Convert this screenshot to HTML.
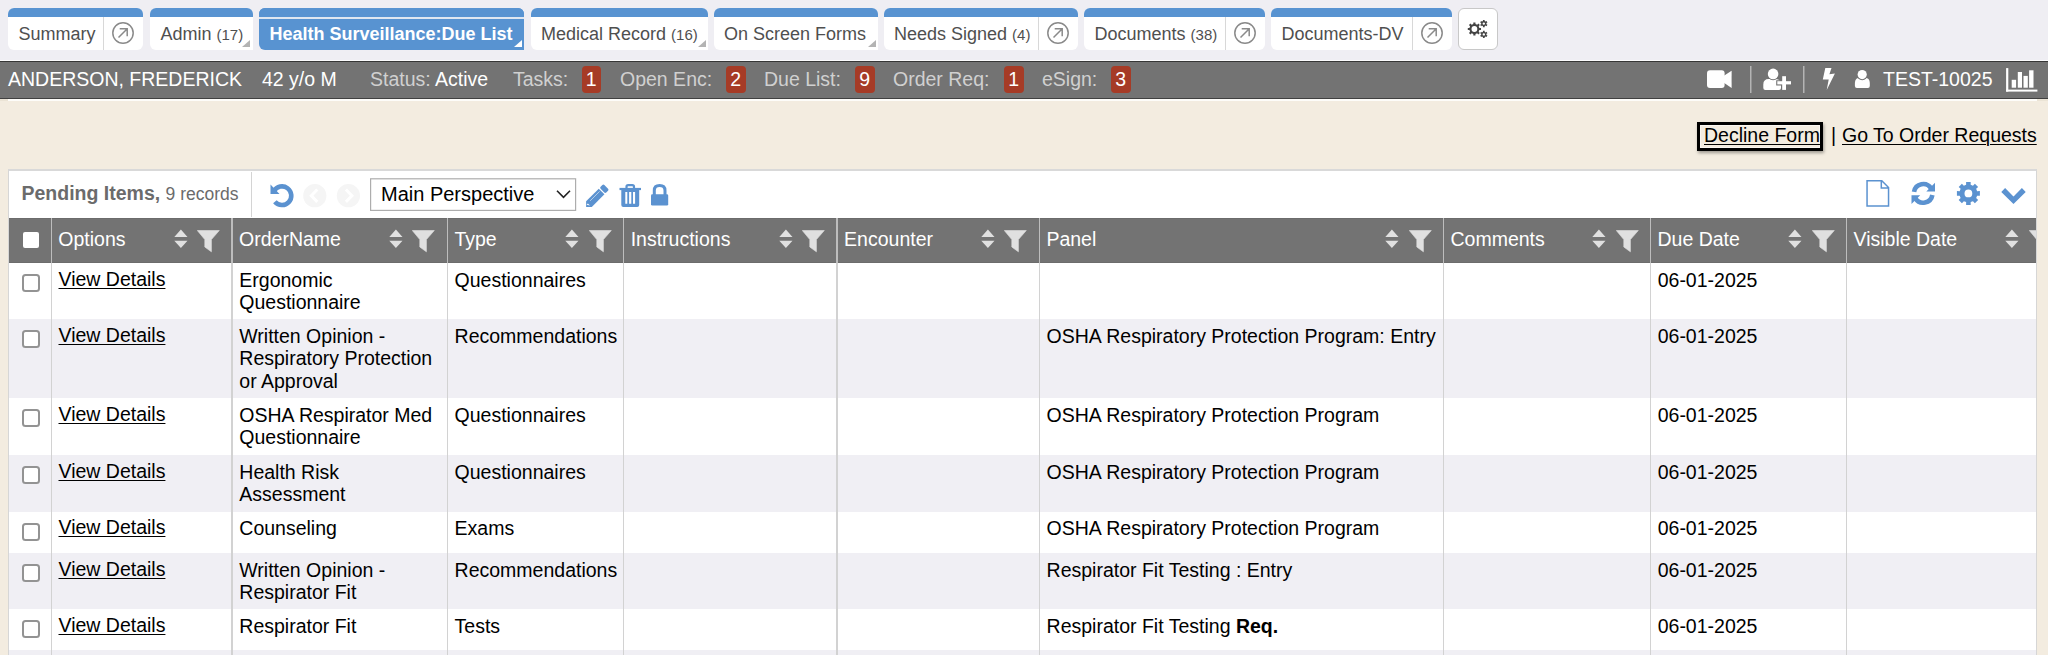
<!DOCTYPE html>
<html><head><meta charset="utf-8">
<style>
*{box-sizing:border-box;margin:0;padding:0}
html,body{width:2048px;height:655px;overflow:hidden}
body{position:relative;background:#f3ece0;font-family:"Liberation Sans",sans-serif;color:#000}
.a{position:absolute}
.t{position:absolute;white-space:nowrap;line-height:1}
#top{left:0;top:0;width:2048px;height:60px;background:#efeef3}
.tab{position:absolute;top:8px;height:42px;background:#fff;border-radius:6px;overflow:hidden}
.tab .strip{position:absolute;left:0;top:0;right:0;height:9px;background:#5893d1}
.tab .tt{position:absolute;top:17.3px;font-size:18px;line-height:1;color:#4f4f4f;white-space:nowrap}
.tab .cnt{font-size:15px}
.tab .dv{position:absolute;top:9px;bottom:0;width:1px;background:#d8d8d8}
.tab .tri{position:absolute;top:32px;width:0;height:0;border-style:solid;border-width:0 0 7px 8px;border-color:transparent transparent #b3b3b3 transparent}
.tab.sq{border-bottom-right-radius:0}
.tab.act{background:#5893d1}
.tab.act .line{position:absolute;left:0;right:0;top:9px;height:1.5px;background:#dfe7f1}
.tab.act .tt{color:#fff;font-weight:bold}
#pbar{left:0;top:60px;width:2048px;height:41px;background:#737373}
#pbar .b1{position:absolute;left:0;top:0;width:2048px;height:1px;background:#363636}
#pbar .b2{position:absolute;left:0;top:37px;width:2048px;height:1px;background:#404040}
#pbar .b3{position:absolute;left:8px;top:38px;width:2040px;height:2px;background:#fdfcf9}
#pbar .b4{position:absolute;left:0;top:38px;width:8px;height:2px;background:#ebe4d6}
.pt{position:absolute;top:9.8px;font-size:19.5px;line-height:1;color:#fff;white-space:nowrap}
.pl{color:#d0d0d0}
.u{text-decoration:underline;text-underline-offset:1.5px;text-decoration-thickness:1.2px}
.cb{position:absolute;width:18px;height:17.5px;border:2px solid #939393;border-radius:3.5px;background:#fff}
.cell{position:absolute;font-size:19.5px;line-height:22.5px;white-space:nowrap}
.badge{position:absolute;top:6px;height:27px;background:#a63b26;border-radius:4px;color:#fff;font-size:19.5px;line-height:27px;text-align:center}
</style></head><body>
<div id="top" class="a">
  <div class="tab" style="left:8px;width:135px"><div class="strip"></div>
    <span class="tt" style="left:10.5px">Summary</span>
    <div class="dv" style="left:95px"></div>
    <svg class="a" style="left:103px;top:13px" width="24" height="24" viewBox="0 0 24 24"><circle cx="12" cy="12" r="10.2" fill="none" stroke="#8a8a8a" stroke-width="1.5"/><path d="M7.5 16.5 L16 8 M8.7 7.8 H16.2 V15.3" fill="none" stroke="#8a8a8a" stroke-width="1.5"/></svg>
  </div>
  <div class="tab sq" style="left:149.5px;width:103px"><div class="strip"></div>
    <span class="tt" style="left:11px">Admin <span class="cnt">(17)</span></span>
    <div class="tri" style="left:92.5px"></div>
  </div>
  <div class="tab act sq" style="left:258.5px;width:265.5px"><div class="strip"></div><div class="line"></div>
    <span class="tt" style="left:11px">Health Surveillance:Due List</span>
    <div class="tri" style="left:255px;border-color:transparent transparent #fff transparent"></div>
  </div>
  <div class="tab sq" style="left:530.5px;width:177px"><div class="strip"></div>
    <span class="tt" style="left:10.5px">Medical Record <span class="cnt">(16)</span></span>
    <div class="tri" style="left:167px"></div>
  </div>
  <div class="tab sq" style="left:713.5px;width:164px"><div class="strip"></div>
    <span class="tt" style="left:10.5px">On Screen Forms</span>
    <div class="tri" style="left:154px"></div>
  </div>
  <div class="tab" style="left:883.5px;width:194.5px"><div class="strip"></div>
    <span class="tt" style="left:10.5px">Needs Signed <span class="cnt">(4)</span></span>
    <div class="dv" style="left:154.5px"></div>
    <svg class="a" style="left:162.5px;top:13px" width="24" height="24" viewBox="0 0 24 24"><circle cx="12" cy="12" r="10.2" fill="none" stroke="#8a8a8a" stroke-width="1.5"/><path d="M7.5 16.5 L16 8 M8.7 7.8 H16.2 V15.3" fill="none" stroke="#8a8a8a" stroke-width="1.5"/></svg>
  </div>
  <div class="tab" style="left:1084px;width:180.5px"><div class="strip"></div>
    <span class="tt" style="left:10.5px">Documents <span class="cnt">(38)</span></span>
    <div class="dv" style="left:141px"></div>
    <svg class="a" style="left:148.5px;top:13px" width="24" height="24" viewBox="0 0 24 24"><circle cx="12" cy="12" r="10.2" fill="none" stroke="#8a8a8a" stroke-width="1.5"/><path d="M7.5 16.5 L16 8 M8.7 7.8 H16.2 V15.3" fill="none" stroke="#8a8a8a" stroke-width="1.5"/></svg>
  </div>
  <div class="tab" style="left:1271px;width:181px"><div class="strip"></div>
    <span class="tt" style="left:10.5px">Documents-DV</span>
    <div class="dv" style="left:141px"></div>
    <svg class="a" style="left:148.5px;top:13px" width="24" height="24" viewBox="0 0 24 24"><circle cx="12" cy="12" r="10.2" fill="none" stroke="#8a8a8a" stroke-width="1.5"/><path d="M7.5 16.5 L16 8 M8.7 7.8 H16.2 V15.3" fill="none" stroke="#8a8a8a" stroke-width="1.5"/></svg>
  </div>
  <div class="a" style="left:1458px;top:8px;width:40px;height:41.5px;background:#fff;border:1.5px solid #c8c8c8;border-radius:6px"></div>
</div>

<div id="pbar" class="a">
  <div class="a" style="left:0;top:0;width:2048px;height:1px;background:#fbfbfd"></div>
  <div class="a" style="left:0;top:1px;width:2048px;height:1px;background:#363636"></div>
  <div class="a" style="left:0;top:38px;width:2048px;height:1px;background:#404040"></div>
  <div class="a" style="left:8px;top:39px;width:2029px;height:2px;background:#fdfcf9"></div><div class="a" style="left:2037px;top:39px;width:11px;height:2px;background:#ebe4d6"></div>
  <div class="a" style="left:0;top:39px;width:8px;height:2px;background:#ebe4d6"></div>
  <span class="pt" style="left:8px">ANDERSON, FREDERICK</span>
  <span class="pt" style="left:262px">42 y/o M</span>
  <span class="pt" style="left:370px"><span class="pl">Status:</span> Active</span>
  <span class="pt pl" style="left:513px">Tasks:</span>
  <div class="badge" style="left:581.5px;width:19.5px">1</div>
  <span class="pt pl" style="left:620px">Open Enc:</span>
  <div class="badge" style="left:726px;width:19.5px">2</div>
  <span class="pt pl" style="left:764px">Due List:</span>
  <div class="badge" style="left:855px;width:19.5px">9</div>
  <span class="pt pl" style="left:893px">Order Req:</span>
  <div class="badge" style="left:1004px;width:19.5px">1</div>
  <span class="pt pl" style="left:1042px">eSign:</span>
  <div class="badge" style="left:1111px;width:19.5px">3</div>
  <span class="pt" style="left:1883px">TEST-10025</span>
  <!-- icons -->
  <svg class="a" style="left:1700px;top:0" width="348" height="38" viewBox="1700 60 348 38">
    <rect x="1707" y="70.3" width="17.6" height="17.7" rx="3" fill="#fff"/>
    <path d="M1723.5 76 L1731.6 70.8 V88 L1723.5 82.6 Z" fill="#fff"/>
    <rect x="1750" y="66" width="1.5" height="27" fill="#b4b4b4"/>
    <path d="M1763.3 88 V84.5 Q1763.3 79 1768.8 79 H1775.5 Q1781 79 1781 84.5 V88 Q1781 89.9 1779 89.9 H1765.3 Q1763.3 89.9 1763.3 88 Z" fill="#fff"/>
    <circle cx="1773.1" cy="73.9" r="6.3" fill="#737373"/>
    <circle cx="1773.1" cy="73.9" r="5.3" fill="#fff"/>
    <path d="M1776.2 80.2 H1793 V85.4 H1787.2 V91.5 H1781 V85.4 H1776.2 Z" fill="#737373"/>
    <rect x="1777.3" y="81.2" width="13.7" height="3.2" fill="#fff"/>
    <rect x="1782.2" y="76.2" width="3.8" height="13.7" fill="#fff"/>
    <rect x="1803" y="66" width="1.5" height="27" fill="#b4b4b4"/>
    <path d="M1825.3 67.9 L1831.5 67.9 L1829.4 74.3 L1834.9 73.4 L1826.7 90 L1828.7 79.6 L1822.8 79.6 Z" fill="#fff"/>
    <path d="M1854.9 86 V83 Q1854.9 77.7 1860.2 77.7 H1864.5 Q1869.8 77.7 1869.8 83 V86 Q1869.8 88 1867.8 88 H1856.9 Q1854.9 88 1854.9 86 Z" fill="#fff"/>
    <circle cx="1862.2" cy="74.6" r="5.6" fill="#737373"/>
    <circle cx="1862.2" cy="74.6" r="4.6" fill="#fff"/>
    <rect x="2006.1" y="68.1" width="2.2" height="23.5" fill="#fff"/>
    <rect x="2006.1" y="89.6" width="31.3" height="2" fill="#fff"/>
    <rect x="2011.7" y="79.8" width="4.4" height="7.9" fill="#fff"/>
    <rect x="2017.8" y="72" width="4.2" height="15.7" fill="#fff"/>
    <rect x="2023.5" y="75.9" width="4.3" height="11.8" fill="#fff"/>
    <rect x="2029.1" y="70.3" width="4.4" height="17.4" fill="#fff"/>
  </svg>
</div>

<div id="links">
  <div class="a" style="left:1697px;top:122px;width:126px;height:29px;border:3px solid #000;box-shadow:1px 2px 3px rgba(0,0,0,0.35)"><div class="a" style="left:0;top:0;right:0;bottom:0;border:1px solid rgba(255,255,255,0.55)"></div></div>
  <span class="t u" style="left:1704px;top:126px;font-size:19.5px">Decline Form</span>
  <span class="t" style="left:1831px;top:126px;font-size:19.5px">|</span>
  <span class="t u" style="left:1842px;top:126px;font-size:19.5px">Go To Order Requests</span>
</div>
<div id="panel" class="a" style="left:8px;top:169px;width:2029px;height:490px;background:#fff;border:1px solid #d6d6d6;border-top:2px solid #d9d9d9;border-bottom:none;overflow:hidden">
<span class="t" style="left:12.5px;top:13.3px;font-size:19.5px;font-weight:bold;color:#6b6b6b">Pending Items, <span style="font-weight:normal;font-size:17.5px">9 records</span></span>
<div class="a" style="left:241.5px;top:1px;width:1.5px;height:45px;background:#d4d4d4"></div>
<span class="t" style="left:372px;top:13px;font-size:20px;color:#000">Main Perspective</span>
<div class="a" style="left:0;top:47px;width:2100px;height:45px;background:#737373;border-top:1px solid #6c6c6c;border-bottom:1px solid #6c6c6c"></div>
<div class="a" style="left:13.5px;top:61px;width:16.5px;height:16px;background:#fff;border-radius:2px"></div>
<div class="a" style="left:0;top:92px;width:2100px;height:56px;background:#fff"></div>
<div class="cb" style="left:13.2px;top:103px"></div>
<span class="t u" style="left:49.5px;top:99.1px;font-size:19.5px">View Details</span>
<div class="cell" style="left:230.3px;top:97.6px">Ergonomic<br>Questionnaire</div>
<div class="cell" style="left:445.6px;top:97.6px">Questionnaires</div>
<div class="cell" style="left:1648.7px;top:97.6px">06-01-2025</div>
<div class="a" style="left:0;top:148px;width:2100px;height:79px;background:#f0eff4"></div>
<div class="cb" style="left:13.2px;top:159px"></div>
<span class="t u" style="left:49.5px;top:155.1px;font-size:19.5px">View Details</span>
<div class="cell" style="left:230.3px;top:153.6px">Written Opinion -<br>Respiratory Protection<br>or Approval</div>
<div class="cell" style="left:445.6px;top:153.6px">Recommendations</div>
<div class="cell" style="left:1037.6px;top:153.6px">OSHA Respiratory Protection Program: Entry</div>
<div class="cell" style="left:1648.7px;top:153.6px">06-01-2025</div>
<div class="a" style="left:0;top:227px;width:2100px;height:57px;background:#fff"></div>
<div class="cb" style="left:13.2px;top:238px"></div>
<span class="t u" style="left:49.5px;top:234.1px;font-size:19.5px">View Details</span>
<div class="cell" style="left:230.3px;top:232.6px">OSHA Respirator Med<br>Questionnaire</div>
<div class="cell" style="left:445.6px;top:232.6px">Questionnaires</div>
<div class="cell" style="left:1037.6px;top:232.6px">OSHA Respiratory Protection Program</div>
<div class="cell" style="left:1648.7px;top:232.6px">06-01-2025</div>
<div class="a" style="left:0;top:284px;width:2100px;height:57px;background:#f0eff4"></div>
<div class="cb" style="left:13.2px;top:295px"></div>
<span class="t u" style="left:49.5px;top:291.1px;font-size:19.5px">View Details</span>
<div class="cell" style="left:230.3px;top:289.6px">Health Risk<br>Assessment</div>
<div class="cell" style="left:445.6px;top:289.6px">Questionnaires</div>
<div class="cell" style="left:1037.6px;top:289.6px">OSHA Respiratory Protection Program</div>
<div class="cell" style="left:1648.7px;top:289.6px">06-01-2025</div>
<div class="a" style="left:0;top:341px;width:2100px;height:41px;background:#fff"></div>
<div class="cb" style="left:13.2px;top:352px"></div>
<span class="t u" style="left:49.5px;top:347.1px;font-size:19.5px">View Details</span>
<div class="cell" style="left:230.3px;top:345.6px">Counseling</div>
<div class="cell" style="left:445.6px;top:345.6px">Exams</div>
<div class="cell" style="left:1037.6px;top:345.6px">OSHA Respiratory Protection Program</div>
<div class="cell" style="left:1648.7px;top:345.6px">06-01-2025</div>
<div class="a" style="left:0;top:382px;width:2100px;height:56px;background:#f0eff4"></div>
<div class="cb" style="left:13.2px;top:393px"></div>
<span class="t u" style="left:49.5px;top:389.1px;font-size:19.5px">View Details</span>
<div class="cell" style="left:230.3px;top:387.6px">Written Opinion -<br>Respirator Fit</div>
<div class="cell" style="left:445.6px;top:387.6px">Recommendations</div>
<div class="cell" style="left:1037.6px;top:387.6px">Respirator Fit Testing : Entry</div>
<div class="cell" style="left:1648.7px;top:387.6px">06-01-2025</div>
<div class="a" style="left:0;top:438px;width:2100px;height:41px;background:#fff"></div>
<div class="cb" style="left:13.2px;top:449px"></div>
<span class="t u" style="left:49.5px;top:445.1px;font-size:19.5px">View Details</span>
<div class="cell" style="left:230.3px;top:443.6px">Respirator Fit</div>
<div class="cell" style="left:445.6px;top:443.6px">Tests</div>
<div class="cell" style="left:1037.6px;top:443.6px">Respirator Fit Testing <b>Req.</b></div>
<div class="cell" style="left:1648.7px;top:443.6px">06-01-2025</div>
<div class="a" style="left:0;top:479px;width:2100px;height:50px;background:#f0eff4"></div>
<div class="a" style="left:41.55px;top:47px;width:1.5px;height:45px;background:#bdbdbd"></div>
<div class="a" style="left:41.55px;top:92px;width:1.5px;height:400px;background:#d2d2d2"></div>
<div class="a" style="left:222.35px;top:47px;width:1.5px;height:45px;background:#bdbdbd"></div>
<div class="a" style="left:222.35px;top:92px;width:1.5px;height:400px;background:#d2d2d2"></div>
<div class="a" style="left:437.65px;top:47px;width:1.5px;height:45px;background:#bdbdbd"></div>
<div class="a" style="left:437.65px;top:92px;width:1.5px;height:400px;background:#d2d2d2"></div>
<div class="a" style="left:613.95px;top:47px;width:1.5px;height:45px;background:#bdbdbd"></div>
<div class="a" style="left:613.95px;top:92px;width:1.5px;height:400px;background:#d2d2d2"></div>
<div class="a" style="left:827.35px;top:47px;width:1.5px;height:45px;background:#bdbdbd"></div>
<div class="a" style="left:827.35px;top:92px;width:1.5px;height:400px;background:#d2d2d2"></div>
<div class="a" style="left:1029.65px;top:47px;width:1.5px;height:45px;background:#bdbdbd"></div>
<div class="a" style="left:1029.65px;top:92px;width:1.5px;height:400px;background:#d2d2d2"></div>
<div class="a" style="left:1433.75px;top:47px;width:1.5px;height:45px;background:#bdbdbd"></div>
<div class="a" style="left:1433.75px;top:92px;width:1.5px;height:400px;background:#d2d2d2"></div>
<div class="a" style="left:1640.75px;top:47px;width:1.5px;height:45px;background:#bdbdbd"></div>
<div class="a" style="left:1640.75px;top:92px;width:1.5px;height:400px;background:#d2d2d2"></div>
<div class="a" style="left:1836.75px;top:47px;width:1.5px;height:45px;background:#bdbdbd"></div>
<div class="a" style="left:1836.75px;top:92px;width:1.5px;height:400px;background:#d2d2d2"></div>
<span class="t" style="left:49.3px;top:58.7px;font-size:19.5px;color:#fff">Options</span>
<svg class="a" style="left:164.6px;top:57.5px" width="14" height="20" viewBox="0 0 14 20"><path d="M6.9 0.4 L13.5 8.1 H0.3 Z M0.3 11.7 H13.5 L6.9 19.1 Z" fill="#e0e0e0"/></svg>
<svg class="a" style="left:188.1px;top:58.5px" width="23" height="23" viewBox="0 0 23 23"><path d="M0.3 0.5 H22.3 L14.4 9.6 V21.8 L7.8 17 V9.6 Z" fill="#e0e0e0" stroke="#e0e0e0" stroke-width="0.6" stroke-linejoin="round"/></svg>
<span class="t" style="left:230.1px;top:58.7px;font-size:19.5px;color:#fff">OrderName</span>
<svg class="a" style="left:379.9px;top:57.5px" width="14" height="20" viewBox="0 0 14 20"><path d="M6.9 0.4 L13.5 8.1 H0.3 Z M0.3 11.7 H13.5 L6.9 19.1 Z" fill="#e0e0e0"/></svg>
<svg class="a" style="left:403.4px;top:58.5px" width="23" height="23" viewBox="0 0 23 23"><path d="M0.3 0.5 H22.3 L14.4 9.6 V21.8 L7.8 17 V9.6 Z" fill="#e0e0e0" stroke="#e0e0e0" stroke-width="0.6" stroke-linejoin="round"/></svg>
<span class="t" style="left:445.4px;top:58.7px;font-size:19.5px;color:#fff">Type</span>
<svg class="a" style="left:556.2px;top:57.5px" width="14" height="20" viewBox="0 0 14 20"><path d="M6.9 0.4 L13.5 8.1 H0.3 Z M0.3 11.7 H13.5 L6.9 19.1 Z" fill="#e0e0e0"/></svg>
<svg class="a" style="left:579.7px;top:58.5px" width="23" height="23" viewBox="0 0 23 23"><path d="M0.3 0.5 H22.3 L14.4 9.6 V21.8 L7.8 17 V9.6 Z" fill="#e0e0e0" stroke="#e0e0e0" stroke-width="0.6" stroke-linejoin="round"/></svg>
<span class="t" style="left:621.7px;top:58.7px;font-size:19.5px;color:#fff">Instructions</span>
<svg class="a" style="left:769.6px;top:57.5px" width="14" height="20" viewBox="0 0 14 20"><path d="M6.9 0.4 L13.5 8.1 H0.3 Z M0.3 11.7 H13.5 L6.9 19.1 Z" fill="#e0e0e0"/></svg>
<svg class="a" style="left:793.1px;top:58.5px" width="23" height="23" viewBox="0 0 23 23"><path d="M0.3 0.5 H22.3 L14.4 9.6 V21.8 L7.8 17 V9.6 Z" fill="#e0e0e0" stroke="#e0e0e0" stroke-width="0.6" stroke-linejoin="round"/></svg>
<span class="t" style="left:835.1px;top:58.7px;font-size:19.5px;color:#fff">Encounter</span>
<svg class="a" style="left:971.9px;top:57.5px" width="14" height="20" viewBox="0 0 14 20"><path d="M6.9 0.4 L13.5 8.1 H0.3 Z M0.3 11.7 H13.5 L6.9 19.1 Z" fill="#e0e0e0"/></svg>
<svg class="a" style="left:995.4px;top:58.5px" width="23" height="23" viewBox="0 0 23 23"><path d="M0.3 0.5 H22.3 L14.4 9.6 V21.8 L7.8 17 V9.6 Z" fill="#e0e0e0" stroke="#e0e0e0" stroke-width="0.6" stroke-linejoin="round"/></svg>
<span class="t" style="left:1037.4px;top:58.7px;font-size:19.5px;color:#fff">Panel</span>
<svg class="a" style="left:1376.0px;top:57.5px" width="14" height="20" viewBox="0 0 14 20"><path d="M6.9 0.4 L13.5 8.1 H0.3 Z M0.3 11.7 H13.5 L6.9 19.1 Z" fill="#e0e0e0"/></svg>
<svg class="a" style="left:1399.5px;top:58.5px" width="23" height="23" viewBox="0 0 23 23"><path d="M0.3 0.5 H22.3 L14.4 9.6 V21.8 L7.8 17 V9.6 Z" fill="#e0e0e0" stroke="#e0e0e0" stroke-width="0.6" stroke-linejoin="round"/></svg>
<span class="t" style="left:1441.5px;top:58.7px;font-size:19.5px;color:#fff">Comments</span>
<svg class="a" style="left:1583.0px;top:57.5px" width="14" height="20" viewBox="0 0 14 20"><path d="M6.9 0.4 L13.5 8.1 H0.3 Z M0.3 11.7 H13.5 L6.9 19.1 Z" fill="#e0e0e0"/></svg>
<svg class="a" style="left:1606.5px;top:58.5px" width="23" height="23" viewBox="0 0 23 23"><path d="M0.3 0.5 H22.3 L14.4 9.6 V21.8 L7.8 17 V9.6 Z" fill="#e0e0e0" stroke="#e0e0e0" stroke-width="0.6" stroke-linejoin="round"/></svg>
<span class="t" style="left:1648.5px;top:58.7px;font-size:19.5px;color:#fff">Due Date</span>
<svg class="a" style="left:1779.0px;top:57.5px" width="14" height="20" viewBox="0 0 14 20"><path d="M6.9 0.4 L13.5 8.1 H0.3 Z M0.3 11.7 H13.5 L6.9 19.1 Z" fill="#e0e0e0"/></svg>
<svg class="a" style="left:1802.5px;top:58.5px" width="23" height="23" viewBox="0 0 23 23"><path d="M0.3 0.5 H22.3 L14.4 9.6 V21.8 L7.8 17 V9.6 Z" fill="#e0e0e0" stroke="#e0e0e0" stroke-width="0.6" stroke-linejoin="round"/></svg>
<span class="t" style="left:1844.5px;top:58.7px;font-size:19.5px;color:#fff">Visible Date</span>
<svg class="a" style="left:1996.4px;top:57.5px" width="14" height="20" viewBox="0 0 14 20"><path d="M6.9 0.4 L13.5 8.1 H0.3 Z M0.3 11.7 H13.5 L6.9 19.1 Z" fill="#e0e0e0"/></svg>
<svg class="a" style="left:2019.9px;top:58.5px" width="23" height="23" viewBox="0 0 23 23"><path d="M0.3 0.5 H22.3 L14.4 9.6 V21.8 L7.8 17 V9.6 Z" fill="#e0e0e0" stroke="#e0e0e0" stroke-width="0.6" stroke-linejoin="round"/></svg>
</div><!--/panel-->












<svg id="ov" class="a" style="left:0;top:0" width="2048" height="655" viewBox="0 0 2048 655"><path d="M273.95 191.05 A9.3 9.3 0 1 1 274.88 201.68" fill="none" stroke="#5b92d0" stroke-width="4.6"/><path d="M270.5 184.6 V194 H279.5 Z" fill="#5b92d0"/><circle cx="314.8" cy="195.7" r="11.6" fill="#f5f5f5"/><path d="M317.3 189.5 L311.3 195.7 L317.3 201.9" fill="none" stroke="#fff" stroke-width="3"/><circle cx="348.4" cy="195.7" r="11.6" fill="#f5f5f5"/><path d="M345.9 189.5 L351.9 195.7 L345.9 201.9" fill="none" stroke="#fff" stroke-width="3"/><g transform="translate(597.5 195.6) rotate(-45)"><path d="M-16.1 0 L-12.1 -4 H5.8 V4 H-12.1 Z" fill="#5b92d0"/><rect x="7" y="-4" width="5.3" height="8" rx="1.4" fill="#5b92d0"/><path d="M-9 -1.5 H4.5" stroke="#d5e3f3" stroke-width="0.7"/><path d="M-14.2 -1.3 L-12.3 -1.3 L-12.3 1.6 Z" fill="#fff"/></g><path d="M626.5 189 V186.8 Q626.5 185.1 628.2 185.1 H632.3 Q634 185.1 634 186.8 V189" fill="none" stroke="#5b92d0" stroke-width="2.2"/><rect x="619.5" y="187.9" width="21.5" height="2.2" fill="#5b92d0"/><path d="M621.3 189.9 H639.2 V205 Q639.2 207 637.2 207 H623.3 Q621.3 207 621.3 205 Z M625.3 192 V203.8 H627.3 V192 Z M629.1 192 V203.8 H631.3 V192 Z M633 192 V203.8 H635.1 V192 Z" fill="#5b92d0" fill-rule="evenodd"/><path d="M654.3 195 V190.5 Q654.3 185.6 659.6 185.6 Q665 185.6 665 190.5 V195" fill="none" stroke="#5b92d0" stroke-width="3"/><rect x="651" y="194.3" width="17.2" height="11.3" rx="1.3" fill="#5b92d0"/><rect x="370.6" y="178.8" width="205" height="31.6" fill="none" stroke="#adadad" stroke-width="1.2"/><path d="M557 190.8 L563.5 197.4 L570 190.8" fill="none" stroke="#222" stroke-width="1.6"/><path d="M1867.05 180.75 H1881.8 L1888.55 187.5 V206.05 H1867.05 Z M1881.3 180.75 V188 H1888.55" fill="none" stroke="#5b92d0" stroke-width="1.5"/><path d="M1914.04 191.79 A9.3 9.3 0 0 1 1931.09 188.47 M1932.36 195.01 A9.3 9.3 0 0 1 1915.31 198.33" fill="none" stroke="#5b92d0" stroke-width="4.6"/><path d="M1935 182.8 V191.5 H1926.3 Z M1911.5 204 V195.3 H1920.2 Z" fill="#5b92d0"/><path d="M1966.12 181.92 L1970.68 181.92 L1970.67 184.69 L1972.95 185.64 L1974.90 183.67 L1978.13 186.90 L1976.16 188.85 L1977.11 191.13 L1979.88 191.12 L1979.88 195.68 L1977.11 195.67 L1976.16 197.95 L1978.13 199.90 L1974.90 203.13 L1972.95 201.16 L1970.67 202.11 L1970.68 204.88 L1966.12 204.88 L1966.13 202.11 L1963.85 201.16 L1961.90 203.13 L1958.67 199.90 L1960.64 197.95 L1959.69 195.67 L1956.92 195.68 L1956.92 191.12 L1959.69 191.13 L1960.64 188.85 L1958.67 186.90 L1961.90 183.67 L1963.85 185.64 L1966.13 184.69 Z M1972.30 193.40 A3.9 3.9 0 1 0 1964.50 193.40 A3.9 3.9 0 1 0 1972.30 193.40 Z" fill="#5b92d0" fill-rule="evenodd"/><path d="M2003.2 190 L2013.5 200.3 L2023.8 190" fill="none" stroke="#5b92d0" stroke-width="5.4"/><path d="M1473.30 22.39 L1475.50 22.39 L1475.49 24.02 L1477.16 24.71 L1478.30 23.55 L1479.85 25.10 L1478.69 26.24 L1479.38 27.91 L1481.01 27.90 L1481.01 30.10 L1479.38 30.09 L1478.69 31.76 L1479.85 32.90 L1478.30 34.45 L1477.16 33.29 L1475.49 33.98 L1475.50 35.61 L1473.30 35.61 L1473.31 33.98 L1471.64 33.29 L1470.50 34.45 L1468.95 32.90 L1470.11 31.76 L1469.42 30.09 L1467.79 30.10 L1467.79 27.90 L1469.42 27.91 L1470.11 26.24 L1468.95 25.10 L1470.50 23.55 L1471.64 24.71 L1473.31 24.02 Z M1477.30 29.00 A2.9 2.9 0 1 0 1471.50 29.00 A2.9 2.9 0 1 0 1477.30 29.00 Z" fill="#444" fill-rule="evenodd"/><path d="M1482.91 19.90 L1484.69 19.90 L1484.61 21.03 L1485.62 21.61 L1486.56 20.98 L1487.44 22.52 L1486.44 23.02 L1486.44 24.18 L1487.44 24.68 L1486.56 26.22 L1485.62 25.59 L1484.61 26.17 L1484.69 27.30 L1482.91 27.30 L1482.99 26.17 L1481.98 25.59 L1481.04 26.22 L1480.16 24.68 L1481.16 24.18 L1481.16 23.02 L1480.16 22.52 L1481.04 20.98 L1481.98 21.61 L1482.99 21.03 Z M1485.00 23.60 A1.2 1.2 0 1 0 1482.60 23.60 A1.2 1.2 0 1 0 1485.00 23.60 Z" fill="#444" fill-rule="evenodd"/><path d="M1482.91 30.70 L1484.69 30.70 L1484.61 31.83 L1485.62 32.41 L1486.56 31.78 L1487.44 33.32 L1486.44 33.82 L1486.44 34.98 L1487.44 35.48 L1486.56 37.02 L1485.62 36.39 L1484.61 36.97 L1484.69 38.10 L1482.91 38.10 L1482.99 36.97 L1481.98 36.39 L1481.04 37.02 L1480.16 35.48 L1481.16 34.98 L1481.16 33.82 L1480.16 33.32 L1481.04 31.78 L1481.98 32.41 L1482.99 31.83 Z M1485.00 34.40 A1.2 1.2 0 1 0 1482.60 34.40 A1.2 1.2 0 1 0 1485.00 34.40 Z" fill="#444" fill-rule="evenodd"/></svg>
</body></html>
